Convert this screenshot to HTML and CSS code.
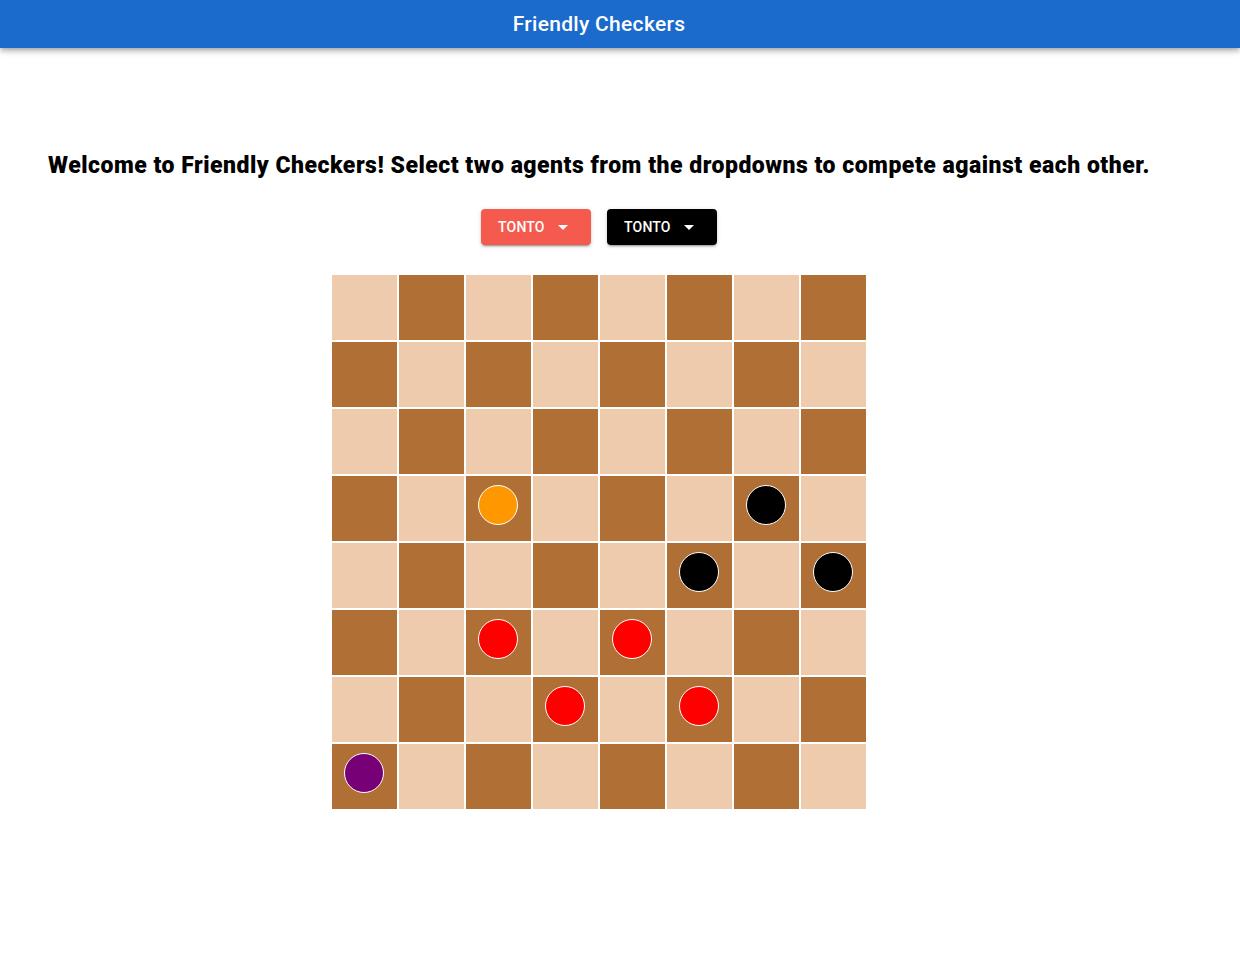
FILE: index.html
```html
<!DOCTYPE html>
<html>
<head>
<meta charset="utf-8">
<link rel="stylesheet" href="styles.css">
</head>
<body>
<header class="appbar"><div class="appbar-inner"><span class="title">Friendly Checkers</span></div></header>
<main class="page">
  <h1 class="welcome">Welcome to Friendly Checkers! Select two agents from the dropdowns to compete against each other.</h1>
  <div class="controls">
    <button class="dd dd-red">TONTO <span class="caret"></span></button>
    <button class="dd dd-black">TONTO <span class="caret"></span></button>
  </div>
  <div class="board">
    <div class="sq l"></div><div class="sq d"></div><div class="sq l"></div><div class="sq d"></div><div class="sq l"></div><div class="sq d"></div><div class="sq l"></div><div class="sq d"></div>
    <div class="sq d"></div><div class="sq l"></div><div class="sq d"></div><div class="sq l"></div><div class="sq d"></div><div class="sq l"></div><div class="sq d"></div><div class="sq l"></div>
    <div class="sq l"></div><div class="sq d"></div><div class="sq l"></div><div class="sq d"></div><div class="sq l"></div><div class="sq d"></div><div class="sq l"></div><div class="sq d"></div>
    <div class="sq d"></div><div class="sq l"></div><div class="sq d"><span class="pc orange"></span></div><div class="sq l"></div><div class="sq d"></div><div class="sq l"></div><div class="sq d"><span class="pc black"></span></div><div class="sq l"></div>
    <div class="sq l"></div><div class="sq d"></div><div class="sq l"></div><div class="sq d"></div><div class="sq l"></div><div class="sq d"><span class="pc black"></span></div><div class="sq l"></div><div class="sq d"><span class="pc black"></span></div>
    <div class="sq d"></div><div class="sq l"></div><div class="sq d"><span class="pc red"></span></div><div class="sq l"></div><div class="sq d"><span class="pc red"></span></div><div class="sq l"></div><div class="sq d"></div><div class="sq l"></div>
    <div class="sq l"></div><div class="sq d"></div><div class="sq l"></div><div class="sq d"><span class="pc red"></span></div><div class="sq l"></div><div class="sq d"><span class="pc red"></span></div><div class="sq l"></div><div class="sq d"></div>
    <div class="sq d"><span class="pc purple"></span></div><div class="sq l"></div><div class="sq d"></div><div class="sq l"></div><div class="sq d"></div><div class="sq l"></div><div class="sq d"></div><div class="sq l"></div>
  </div>
</main>
</body>
</html>
```
FILE: styles.css
```css
* { box-sizing: border-box; }
html, body { margin: 0; padding: 0; background: #fff; }
body { font-family: Roboto, "Liberation Sans", sans-serif; }

.appbar {
  height: 48px;
  background: #1a6bcb;
  box-shadow: 0 2px 4px -1px rgba(0,0,0,.2), 0 4px 5px 0 rgba(0,0,0,.14), 0 1px 10px 0 rgba(0,0,0,.12);
}
.appbar-inner {
  width: 1198px;
  height: 48px;
  display: flex;
  align-items: center;
  justify-content: center;
}
.title {
  color: #fff;
  font-size: 21px;
  font-weight: 500;
  letter-spacing: 0.3px;
}

.page {
  width: 1198px;
  display: flex;
  flex-direction: column;
  align-items: center;
  padding-top: 102px;
}
.welcome {
  margin: 0;
  font-family: Roboto, sans-serif;
  font-weight: 900;
  font-size: 23px;
  line-height: 32px;
  letter-spacing: 0.5px;
  color: #000;
  white-space: nowrap;
}
.controls {
  display: flex;
  gap: 16px;
  margin-top: 27px;
}
.dd {
  height: 36px;
  width: 110px;
  border: none;
  border-radius: 4px;
  font-family: Roboto, sans-serif;
  font-size: 14px;
  font-weight: 500;
  letter-spacing: 0.2px;
  color: #fff;
  padding: 0 0 0 17px;
  display: flex;
  align-items: center;
  box-shadow: 0 3px 1px -2px rgba(0,0,0,.2), 0 2px 2px 0 rgba(0,0,0,.14), 0 1px 5px 0 rgba(0,0,0,.12);
}
.dd-red { background: #f55a4f; }
.dd-black { background: #000; }
.caret {
  margin-left: 13px;
  width: 0; height: 0;
  border-left: 5px solid transparent;
  border-right: 5px solid transparent;
  border-top: 5px solid #fff;
}

.board {
  margin-top: 29px;
  display: grid;
  grid-template-columns: repeat(8, 67px);
  grid-template-rows: repeat(8, 67px);
}
.sq {
  border: 1px solid #fff;
  display: flex;
  justify-content: center;
  align-items: flex-start;
  padding-top: 9px;
}
.l { background: #eecbad; }
.d { background: #b07035; }
.pc {
  width: 40px;
  height: 40px;
  margin-left: -1px;
  border-radius: 50%;
  border: 1px solid #fff;
}
.orange { background: #ff9800; }
.black { background: #000; }
.red { background: #ff0000; }
.purple { background: #770077; }
```
